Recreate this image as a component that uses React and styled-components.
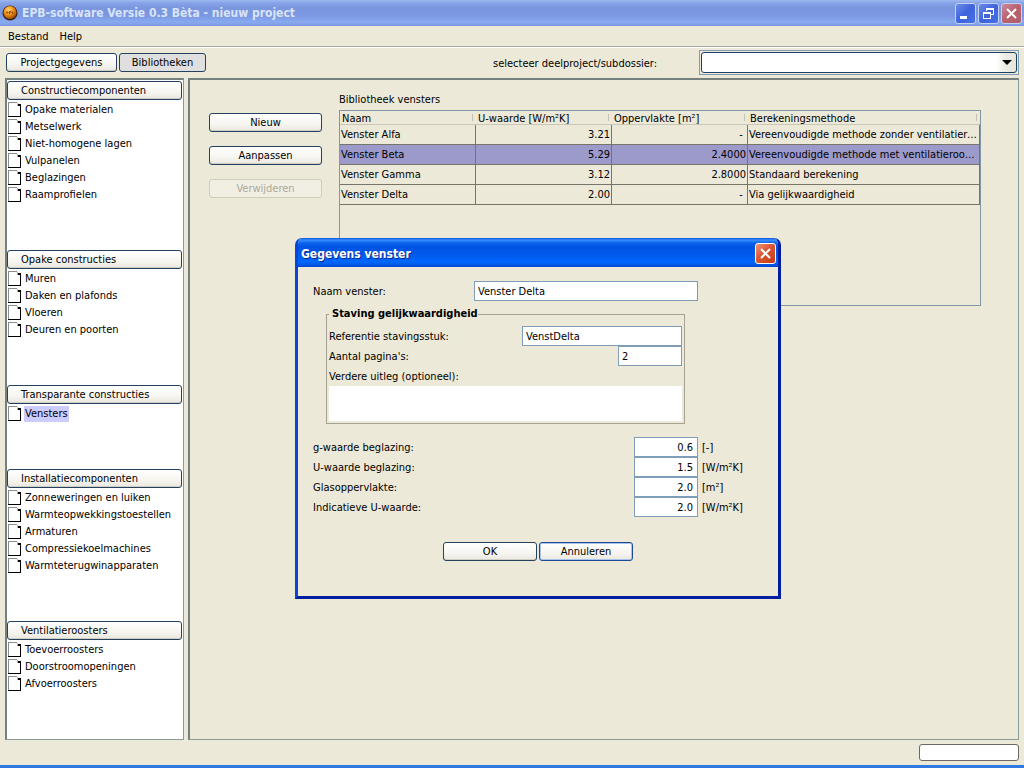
import React, { useState } from "react";
import styled, { createGlobalStyle, css } from "styled-components";

const GlobalStyle = createGlobalStyle`
  * {
    box-sizing: border-box;
  }
  html,
  body,
  #root {
    height: 100%;
    margin: 0;
  }
  body,
  button,
  input,
  select,
  textarea {
    font-family: "DejaVu Sans Condensed", "DejaVu Sans", sans-serif;
    font-size: 11px;
    line-height: 14px;
    color: #000;
  }
`;

const Window = styled.div`
  position: relative;
  display: flex;
  flex-direction: column;
  min-height: 100%;
  background: #ece9d8;
  border-bottom: 3px solid #2f7ae0;
`;

const TitleBar = styled.header`
  display: flex;
  align-items: center;
  gap: 4px;
  height: 26px;
  padding: 0 2px;
  background: linear-gradient(#9db9f0 0, #86a3e8 3px, #7a96df 8px, #7c98e2 16px, #88aaf0 22px, #7d97e0 26px);
`;

const WindowTitle = styled.h1`
  flex: 1;
  margin: 0;
  font-size: 12px;
  font-weight: 700;
  line-height: 18px;
  color: #d8e4f8;
`;

const CaptionButtons = styled.div`
  display: flex;
  gap: 2px;
`;

const CaptionButton = styled.button`
  display: flex;
  align-items: center;
  justify-content: center;
  width: 21px;
  height: 21px;
  padding: 0;
  border: 1px solid ${(props) => (props.$active ? "#fff" : "#c3d0f2")};
  border-radius: 3px;
  background: ${(props) =>
    props.$active
      ? "linear-gradient(135deg, #ee9578, #dc5634 45%, #c33c16)"
      : props.$close
      ? "linear-gradient(135deg, #c98a9a, #b9616c 50%, #b0606e)"
      : "linear-gradient(135deg, #6a8be8, #3e63dc 50%, #4871e4)"};
`;

const MenuBar = styled.nav`
  display: flex;
  gap: 11px;
  height: 21px;
  padding: 0 8px;
  border-bottom: 1px solid #aca899;
  box-shadow: 0 1px 0 #fff;
`;

const MenuItem = styled.button`
  padding: 2px 0 0;
  border: 0;
  background: none;
`;

const Toolbar = styled.div`
  display: flex;
  align-items: center;
  gap: 2px;
  height: 31px;
  padding: 0 6px;
`;

const buttonLook = css`
  height: 19px;
  padding: 1px 12px 0;
  line-height: 14px;
  border: 1px solid #24425f;
  border-radius: 3px;
  box-shadow: inset 0 -1px 0 #d0cec4;
  background: linear-gradient(#fff, #f6f5f0 60%, #e9e7de);
`;

const TabButton = styled.button`
  ${buttonLook}
  width: ${(props) => props.$width}px;
  padding: 0;
  ${(props) =>
    props.$pressed &&
    css`
      background: #dedfde;
      box-shadow: none;
    `}
`;

const ProjectLabel = styled.label`
  width: 204px;
  margin-left: auto;
  padding-top: 2px;
`;

const SelectFrame = styled.div`
  position: relative;
  width: 320px;
  margin-right: -1px;
  padding: 1px;
  border: 1px solid #7f9db9;
`;

const Select = styled.select`
  display: block;
  width: 100%;
  height: 21px;
  appearance: none;
  border: 1px solid #1c4163;
  border-radius: 3px;
  background: linear-gradient(90deg, #fff calc(100% - 20px), #eeede6 calc(100% - 12px), #e6e4da);
`;

const SelectArrow = styled.svg`
  position: absolute;
  top: 9px;
  right: 6px;
  pointer-events: none;
`;

const Body = styled.div`
  display: flex;
  flex: 1;
  gap: 4px;
  padding: 0 5px;
`;

const Sidebar = styled.aside`
  display: flex;
  flex-direction: column;
  gap: 47px;
  width: 179px;
  padding: 1px 1px 0 0;
  background: #fff;
  border: 1px solid #8a9a9a;
  border-top: 2px solid #74817f;
  border-left: 2px solid #74817f;
`;

const GroupHeader = styled.button`
  ${buttonLook}
  display: block;
  width: 100%;
  margin-bottom: 1px;
  padding: 1px 13px 0;
  text-align: left;
`;

const ItemList = styled.ul`
  margin: 0;
  padding: 0;
  list-style: none;
`;

const Item = styled.li`
  display: flex;
  align-items: center;
  height: 17px;
  padding-left: 1px;
`;

const ItemLink = styled.a`
  margin-left: 3px;
  padding: 1px;
  color: #000;
  text-decoration: none;
  background: ${(props) => (props.$selected ? "#ccccff" : "none")};
`;

const Main = styled.main`
  display: flex;
  flex: 1;
  align-items: flex-start;
  gap: 17px;
  padding: 12px 37px 0 19px;
  border: 1px solid #8a9a9a;
  border-top: 2px solid #74817f;
  border-left: 2px solid #74817f;
`;

const Actions = styled.div`
  display: flex;
  flex-direction: column;
  gap: 14px;
  width: 113px;
  padding-top: 21px;
`;

const ActionButton = styled.button`
  ${buttonLook}
  &:disabled {
    color: #aca899;
    background: #f1efe4;
    border-color: #cfccb8;
    box-shadow: none;
  }
`;

const Library = styled.section`
  flex: 1;
  min-width: 0;
`;

const LibraryTitle = styled.h2`
  margin: 0;
  padding: 1px 0 3px;
  font-size: 11px;
  font-weight: 400;
  line-height: 14px;
`;

const TableFrame = styled.div`
  height: 196px;
  border: 1px solid #8296a8;
`;

const Table = styled.table`
  width: 100%;
  table-layout: fixed;
  border-collapse: separate;
  border-spacing: 0;
`;

const HeadCell = styled.th`
  width: ${(props) => (props.$width ? props.$width + "px" : "auto")};
  height: 14px;
  padding: 2px 2px 0;
  font-weight: 400;
  line-height: 11px;
  text-align: left;
  border-bottom: 1px solid #cbc7b8;
  background: linear-gradient(#c5c1b0, #c5c1b0) right 3px top 3px / 1px 7px no-repeat;
`;

const Row = styled.tr`
  background: ${(props) => (props.$selected ? "#9c9acb" : "none")};
`;

const Cell = styled.td`
  height: 20px;
  padding: 0 1px;
  overflow: hidden;
  text-align: ${(props) => (props.$number ? "right" : "left")};
  text-overflow: ellipsis;
  white-space: nowrap;
  border-right: 1px solid #77756a;
  border-bottom: 1px solid #77756a;
`;

const StatusBar = styled.footer`
  display: flex;
  align-items: center;
  justify-content: flex-end;
  height: 25px;
  padding: 0 5px;
`;

const ProgressBox = styled.div`
  width: 100px;
  height: 17px;
  background: #fff;
  border: 1px solid #6b6862;
  border-radius: 3px;
`;

/* dialog floats over the library screen */
const Dialog = styled.div`
  position: absolute;
  top: 238px;
  left: 295px;
  width: 486px;
  height: 361px;
  overflow: hidden;
  background: #ece9d8;
  border: 3px solid #0a34c4;
  border-top: 0;
  border-color: #0831d9 #001ea0 #001ea0 #0a45d6;
  border-radius: 7px 7px 0 0;
`;

const DialogTitleBar = styled.div`
  display: flex;
  align-items: center;
  justify-content: space-between;
  height: 29px;
  margin: 0 -3px;
  padding: 2px 5px 0 6px;
  background: linear-gradient(#0a52d8 0, #3a91ff 2px, #0c62ee 5px, #0054e3 9px, #0058ea 16px, #0068ff 24px, #0048d0 29px);
`;

const DialogTitle = styled.h2`
  margin: 0;
  font-size: 12px;
  font-weight: 700;
  line-height: 18px;
  color: #fff;
  text-shadow: 1px 1px 0 #0a2a8c;
`;

const DialogForm = styled.form`
  padding: 14px 80px 0 15px;
`;

const FormRow = styled.div`
  display: flex;
  align-items: center;
  height: 20px;
`;

const FormLabel = styled.label`
  flex: 1;
  padding-top: 2px;
`;

const TextInput = styled.input`
  width: ${(props) => props.$width}px;
  height: 20px;
  padding: 0 ${(props) => (props.$number ? 4 : 3)}px;
  text-align: ${(props) => (props.$number ? "right" : "left")};
  border: 1px solid #7f9db9;
  border-radius: 0;
  background: #fff;
`;

const Unit = styled.span`
  width: 0;
  margin-right: -4px;
  padding: 2px 0 0 4px;
  white-space: nowrap;
`;

const Fieldset = styled.fieldset`
  min-width: 0;
  margin: 6px 13px 13px;
  padding: 5px 2px 2px;
  border: 1px solid #a5a294;
`;

const Legend = styled.legend`
  padding: 0 0 0 3px;
  font-weight: 700;
  line-height: 14px;
`;

const TextArea = styled.textarea`
  display: block;
  width: 100%;
  height: 35px;
  padding: 2px;
  resize: none;
  border: 0;
  background: #fff;
`;

const DialogButtons = styled.div`
  display: flex;
  justify-content: center;
  gap: 2px;
  margin-top: 25px;
  padding-left: 65px;
`;

const DialogButton = styled.button`
  ${buttonLook}
  width: 94px;
  padding: 0;
  ${(props) =>
    props.$focused &&
    css`
      border-color: #1c4a94;
      box-shadow: inset 0 0 0 1px #a9c2ee;
    `}
`;

const groups = [
  {
    title: "Constructiecomponenten",
    items: ["Opake materialen", "Metselwerk", "Niet-homogene lagen", "Vulpanelen", "Beglazingen", "Raamprofielen"],
  },
  { title: "Opake constructies", items: ["Muren", "Daken en plafonds", "Vloeren", "Deuren en poorten"] },
  { title: "Transparante constructies", items: ["Vensters"] },
  {
    title: "Installatiecomponenten",
    items: [
      "Zonneweringen en luiken",
      "Warmteopwekkingstoestellen",
      "Armaturen",
      "Compressiekoelmachines",
      "Warmteterugwinapparaten",
    ],
  },
  { title: "Ventilatieroosters", items: ["Toevoerroosters", "Doorstroomopeningen", "Afvoerroosters"] },
];

const windows = [
  { name: "Venster Alfa", u: "3.21", area: "-\u00a0", method: "Vereenvoudigde methode zonder ventilatierooster" },
  { name: "Venster Beta", u: "5.29", area: "2.4000", method: "Vereenvoudigde methode met ventilatierooster" },
  { name: "Venster Gamma", u: "3.12", area: "2.8000", method: "Standaard berekening" },
  { name: "Venster Delta", u: "2.00", area: "-\u00a0", method: "Via gelijkwaardigheid" },
];

const values = [
  { id: "g", label: "g-waarde beglazing:", value: "0.6", unit: "[-]" },
  { id: "u", label: "U-waarde beglazing:", value: "1.5", unit: "[W/m²K]" },
  { id: "glas", label: "Glasoppervlakte:", value: "2.0", unit: "[m²]" },
  { id: "ind", label: "Indicatieve U-waarde:", value: "2.0", unit: "[W/m²K]" },
];

const AppIcon = () => (
  <svg width="16" height="16" viewBox="0 0 16 16" aria-hidden="true">
    <defs>
      <radialGradient id="orb" cx="40%" cy="30%" r="70%">
        <stop offset="0" stopColor="#ffd078" />
        <stop offset="0.45" stopColor="#f59a1c" />
        <stop offset="1" stopColor="#a34c08" />
      </radialGradient>
    </defs>
    <circle cx="8" cy="8" r="7.5" fill="#3a2418" />
    <circle cx="8" cy="7.5" r="6.5" fill="url(#orb)" />
    <path d="M4.5 7.5h2M5 6.5v2M7.5 9V6.5h1.5V8M10.5 6.5v2h1" fill="none" stroke="#8a4a10" />
  </svg>
);

const PageIcon = () => (
  <svg width="13" height="15" viewBox="0 0 13 15" shapeRendering="crispEdges" aria-hidden="true">
    <path d="M0 0h10l3 3v12H0z" fill="#fff" />
    <path d="M0.5 14V0.5H9" fill="none" stroke="#8c8c8c" />
    <path d="M9.5 1v2.5h2" fill="none" stroke="#b0b0b0" />
    <path d="M10 2h3v13H0v-1h12V4h-2z" fill="#000" />
  </svg>
);

const CloseIcon = () => (
  <svg width="13" height="13" viewBox="0 0 13 13" aria-hidden="true">
    <path d="M2 2l9 9M11 2l-9 9" stroke="#fff" strokeWidth="2" />
  </svg>
);

const App = () => {
  const [selected, setSelected] = useState("Vensters");

  return (
    <>
      <GlobalStyle />
      <Window>
        <TitleBar>
          <AppIcon />
          <WindowTitle>EPB-software Versie 0.3 Bèta - nieuw project</WindowTitle>
          <CaptionButtons>
            <CaptionButton aria-label="Minimaliseren">
              <svg width="13" height="13" viewBox="0 0 13 13">
                <path d="M1 10.5h7" stroke="#fff" strokeWidth="3" />
              </svg>
            </CaptionButton>
            <CaptionButton aria-label="Herstellen">
              <svg width="13" height="13" viewBox="0 0 13 13" fill="none" stroke="#fff" shapeRendering="crispEdges">
                <path d="M4.5 4V1.5h7v6H9M4 2.5h8" />
                <path d="M1.5 5.5h7v6h-7zM1 6.5h8" />
              </svg>
            </CaptionButton>
            <CaptionButton $close aria-label="Sluiten">
              <CloseIcon />
            </CaptionButton>
          </CaptionButtons>
        </TitleBar>

        <MenuBar>
          <MenuItem>Bestand</MenuItem>
          <MenuItem>Help</MenuItem>
        </MenuBar>

        <Toolbar>
          <TabButton $width={111}>Projectgegevens</TabButton>
          <TabButton $width={87} $pressed>
            Bibliotheken
          </TabButton>
          <ProjectLabel htmlFor="project">selecteer deelproject/subdossier:</ProjectLabel>
          <SelectFrame>
            <Select id="project" />
            <SelectArrow width="10" height="6" viewBox="0 0 10 6" aria-hidden="true">
              <path d="M0 0h10L5 5z" fill="#000" />
            </SelectArrow>
          </SelectFrame>
        </Toolbar>

        <Body>
          <Sidebar>
            {groups.map((group) => (
              <div key={group.title}>
                <GroupHeader>{group.title}</GroupHeader>
                <ItemList>
                  {group.items.map((item) => (
                    <Item key={item}>
                      <PageIcon />
                      <ItemLink href="#" $selected={item === selected} onClick={() => setSelected(item)}>
                        {item}
                      </ItemLink>
                    </Item>
                  ))}
                </ItemList>
              </div>
            ))}
          </Sidebar>

          <Main>
            <Actions>
              <ActionButton>Nieuw</ActionButton>
              <ActionButton>Aanpassen</ActionButton>
              <ActionButton disabled>Verwijderen</ActionButton>
            </Actions>
            <Library>
              <LibraryTitle>Bibliotheek vensters</LibraryTitle>
              <TableFrame>
                <Table>
                  <thead>
                    <tr>
                      <HeadCell $width={136}>Naam</HeadCell>
                      <HeadCell $width={136}>U-waarde [W/m²K]</HeadCell>
                      <HeadCell $width={136}>Oppervlakte [m²]</HeadCell>
                      <HeadCell>Berekeningsmethode</HeadCell>
                    </tr>
                  </thead>
                  <tbody>
                    {windows.map((w) => (
                      <Row key={w.name} $selected={w.name === "Venster Beta"}>
                        <Cell>{w.name}</Cell>
                        <Cell $number>{w.u}</Cell>
                        <Cell $number>{w.area}</Cell>
                        <Cell>{w.method}</Cell>
                      </Row>
                    ))}
                  </tbody>
                </Table>
              </TableFrame>
            </Library>
          </Main>
        </Body>

        <StatusBar>
          <ProgressBox />
        </StatusBar>

        <Dialog role="dialog" aria-labelledby="dialog-title">
          <DialogTitleBar>
            <DialogTitle id="dialog-title">Gegevens venster</DialogTitle>
            <CaptionButton $active aria-label="Sluiten">
              <CloseIcon />
            </CaptionButton>
          </DialogTitleBar>
          <DialogForm onSubmit={(e) => e.preventDefault()}>
            <FormRow>
              <FormLabel htmlFor="naam">Naam venster:</FormLabel>
              <TextInput id="naam" $width={224} defaultValue="Venster Delta" />
            </FormRow>
            <Fieldset>
              <Legend>Staving gelijkwaardigheid</Legend>
              <FormRow>
                <FormLabel htmlFor="ref">Referentie stavingsstuk:</FormLabel>
                <TextInput id="ref" $width={160} defaultValue="VenstDelta" />
              </FormRow>
              <FormRow>
                <FormLabel htmlFor="pag">Aantal pagina's:</FormLabel>
                <TextInput id="pag" $width={64} defaultValue="2" />
              </FormRow>
              <FormRow>
                <FormLabel htmlFor="uitleg">Verdere uitleg (optioneel):</FormLabel>
              </FormRow>
              <TextArea id="uitleg" />
            </Fieldset>
            {values.map((v) => (
              <FormRow key={v.id}>
                <FormLabel htmlFor={v.id}>{v.label}</FormLabel>
                <TextInput id={v.id} $width={64} $number defaultValue={v.value} />
                <Unit>{v.unit}</Unit>
              </FormRow>
            ))}
            <DialogButtons>
              <DialogButton>OK</DialogButton>
              <DialogButton $focused>Annuleren</DialogButton>
            </DialogButtons>
          </DialogForm>
        </Dialog>
      </Window>
    </>
  );
};

export default App;
